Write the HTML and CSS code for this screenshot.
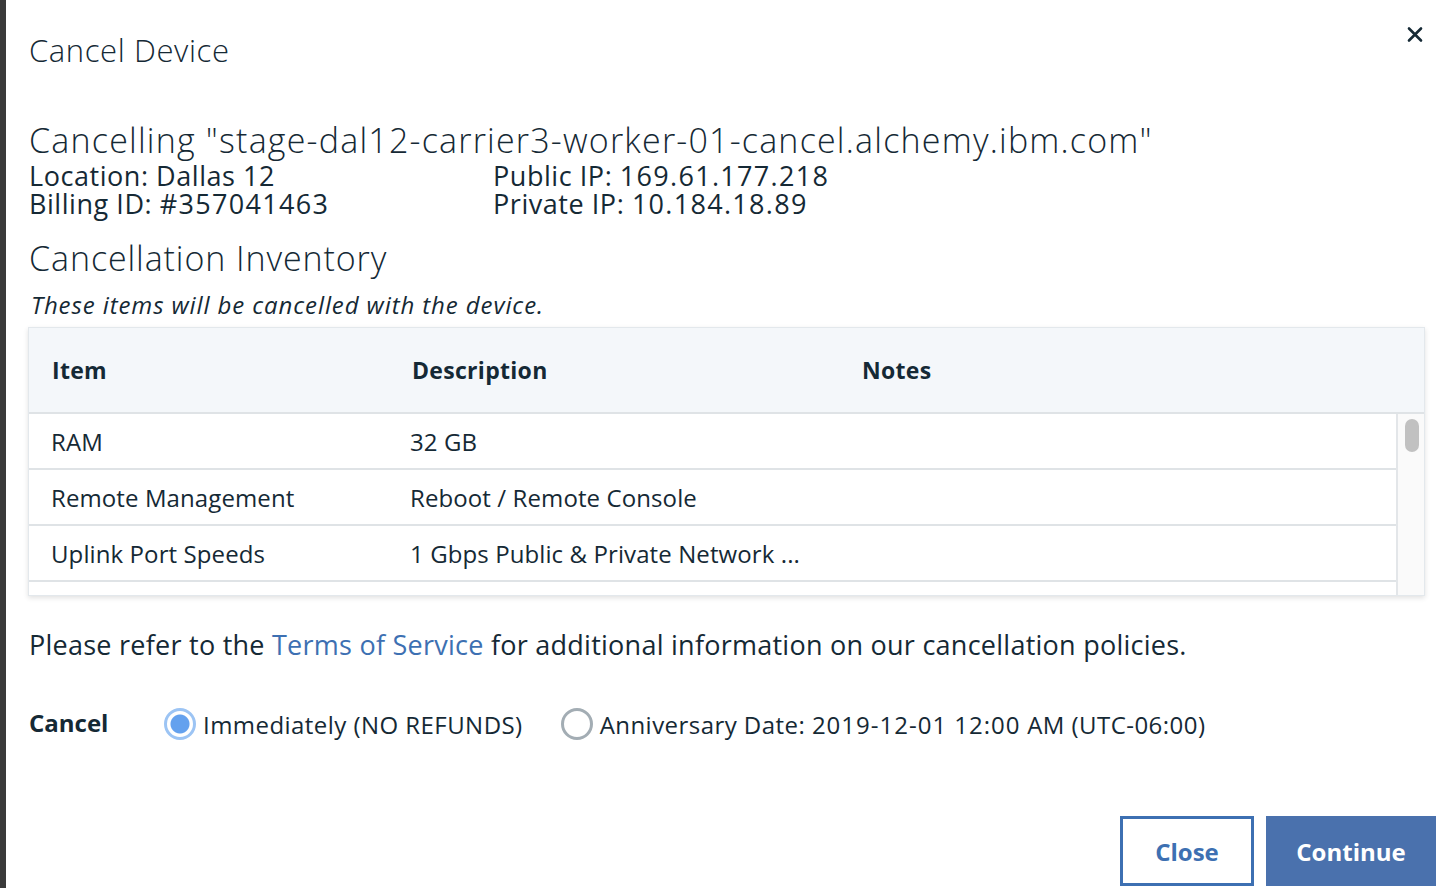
FILE: index.html
```html
<!DOCTYPE html>
<html lang="en">
<head>
<meta charset="utf-8">
<title>Cancel Device</title>
<link rel="stylesheet" href="styles.css">
</head>
<body>
<div class="backdrop"></div>
<div class="modal">
  <button class="close-x" aria-label="Close">
    <svg width="16" height="17" viewBox="0 0 16 17"><path d="M2 2.5 L14 14.5 M14 2.5 L2 14.5" stroke="#152935" stroke-width="2.6" stroke-linecap="round"/></svg>
  </button>
  <h1 class="title">Cancel Device</h1>
  <h2 class="subtitle">Cancelling "stage-dal12-carrier3-worker-01-cancel.alchemy.ibm.com"</h2>
  <div class="info">
    <div>Location: Dallas 12</div>
    <div>Public IP: <span class="num">169.61.177.218</span></div>
    <div>Billing ID: <span class="num">#357041463</span></div>
    <div>Private IP: <span class="num">10.184.18.89</span></div>
  </div>
  <h2 class="section">Cancellation Inventory</h2>
  <p class="note">These items will be cancelled with the device.</p>
  <div class="table">
    <div class="thead">
      <div class="c1">Item</div>
      <div class="c2">Description</div>
      <div class="c3">Notes</div>
    </div>
    <div class="tbody">
      <div class="rows">
        <div class="row"><div class="c1">RAM</div><div class="c2">32 GB</div><div class="c3"></div></div>
        <div class="row"><div class="c1">Remote Management</div><div class="c2">Reboot / Remote Console</div><div class="c3"></div></div>
        <div class="row"><div class="c1">Uplink Port Speeds</div><div class="c2">1 Gbps Public &amp; Private Network ...</div><div class="c3"></div></div>
      </div>
      <div class="scrollbar"><div class="thumb"></div></div>
    </div>
  </div>
  <p class="terms">Please refer to the <a href="#">Terms of Service</a> for additional information on our cancellation policies.</p>
  <div class="cancel-row">
    <span class="cancel-label">Cancel</span>
    <label class="radio checked"><span class="dot"></span>Immediately (NO REFUNDS)</label>
    <label class="radio"><span class="dot"></span>Anniversary Date: <span class="num">2019-12-01 12:00</span> AM (UTC-06:00)</label>
  </div>
  <div class="footer">
    <button class="btn secondary">Close</button>
    <button class="btn primary">Continue</button>
  </div>
</div>
</body>
</html>
```
FILE: styles.css
```css
html, body {
  margin: 0;
  height: 100%;
  overflow: hidden;
}
body {
  display: flex;
  background: #ffffff;
  font-family: "Open Sans", "Noto Sans", sans-serif;
  color: #152935;
}
.backdrop {
  width: 6px;
  flex: none;
  background: #3a3a3a;
}
.modal {
  position: relative;
  flex: 1;
  padding: 30px 10px 0 23px;
  box-sizing: border-box;
  min-width: 0;
}
.close-x {
  position: absolute;
  top: 26px;
  right: 23px;
  padding: 0;
  border: 0;
  background: none;
  width: 16px;
  height: 17px;
  display: block;
}
.close-x svg { display: block; }
.title {
  margin: 0;
  font-size: 31px;
  font-weight: 300;
  letter-spacing: 0.6px;
  line-height: 40px;
}
.subtitle {
  margin: 50px 0 0;
  font-size: 34px;
  font-weight: 300;
  letter-spacing: 1.2px;
  line-height: 40px;
}
.info {
  margin-top: 2px;
  display: grid;
  grid-template-columns: 464px auto;
  font-size: 27px;
  letter-spacing: 0.55px;
  line-height: 28px;
}
.info .num { letter-spacing: 1.3px; }
.section {
  margin: 20px 0 0;
  font-size: 34px;
  font-weight: 300;
  letter-spacing: 0.9px;
  line-height: 40px;
}
.note {
  margin: 12px 0 0 2px;
  font-style: italic;
  font-size: 24px;
  letter-spacing: 0.9px;
  line-height: 30px;
}
.table {
  margin: 7px 11px 0 -1px;
  border: 1px solid #e3e8ec;
  box-shadow: 0 2px 5px rgba(0, 0, 0, 0.12);
  background: #fff;
}
.thead {
  display: flex;
  align-items: center;
  height: 86px;
  background: #f4f7fa;
  border-bottom: 2px solid #dfe3e6;
  font-weight: 700;
  font-size: 23px;
  letter-spacing: 0.3px;
  box-sizing: border-box;
}
.c1 { width: 383px; padding-left: 23px; box-sizing: border-box; flex: none; }
.c2 { width: 450px; flex: none; }
.c3 { flex: 1; }
.tbody {
  display: flex;
  height: 181px;
}
.rows {
  flex: 1;
  overflow: hidden;
  border-right: 2px solid #e3e6e9;
}
.row {
  display: flex;
  align-items: center;
  height: 56px;
  border-bottom: 2px solid #dfe3e6;
  box-sizing: border-box;
  font-size: 24px;
  letter-spacing: 0.1px;
}
.row .c1 { padding-left: 22px; }
.row .c2 { margin-left: -2px; }
.scrollbar {
  width: 26px;
  flex: none;
  background: #fafafa;
  padding: 5px 5px 0 7px;
  box-sizing: border-box;
}
.thumb {
  height: 33px;
  border-radius: 7px;
  background: #c1c1c1;
}
.terms {
  margin: 31px 0 0;
  font-size: 27px;
  letter-spacing: 0.25px;
  line-height: 36px;
}
.terms a {
  color: #3d70b2;
  text-decoration: none;
}
.cancel-row {
  margin-top: 41px;
  display: flex;
  align-items: center;
  height: 40px;
  font-size: 24px;
}
.cancel-label {
  font-weight: 700;
  width: 135px;
  flex: none;
  margin-top: -4px;
}
.radio {
  display: flex;
  align-items: center;
  margin-right: 38px;
  letter-spacing: 0.45px;
  white-space: pre;
}
.radio .num { letter-spacing: 1px; }
.dot {
  width: 32px;
  height: 32px;
  border-radius: 50%;
  box-sizing: border-box;
  border: 3px solid #a3adb4;
  background: #fff;
  margin-right: 7px;
  flex: none;
}
.radio.checked .dot {
  border: 3px solid #9cc4f4;
  background: radial-gradient(circle, #64a1ee 0 9px, #ffffff 10px);
}
.footer {
  margin: 72px -10px 0 0;
  display: flex;
  justify-content: flex-end;
  gap: 12px;
  padding-right: 10px;
}
.btn {
  height: 70px;
  font-family: inherit;
  font-size: 24px;
  font-weight: 700;
  box-sizing: border-box;
}
.secondary {
  width: 134px;
  background: #fff;
  color: #3d70b2;
  border: 3px solid #3d70b2;
}
.primary {
  width: 170px;
  background: #4a71ad;
  color: #fff;
  border: 0;
}
```
